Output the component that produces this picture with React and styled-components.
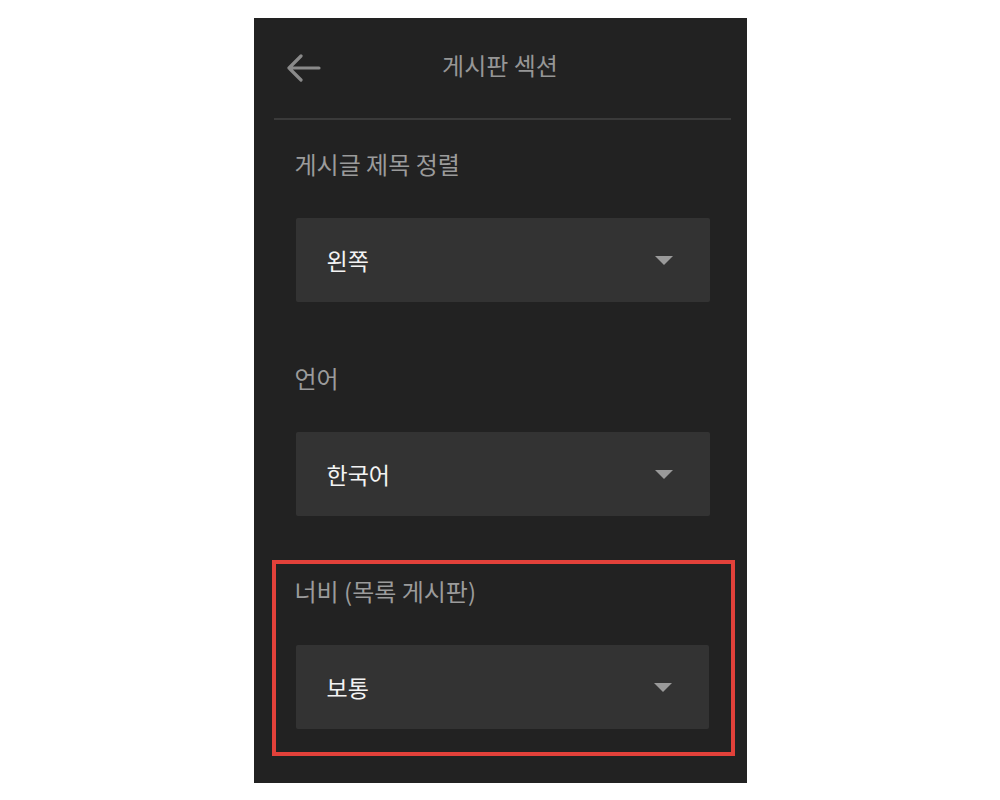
import React from "react";
import styled, { createGlobalStyle } from "styled-components";

const Global = createGlobalStyle`
  html, body { margin: 0; padding: 0; background: #ffffff; }
  body { font-family: "Noto Sans CJK KR", "Noto Sans", sans-serif; }
`;

const Panel = styled.div`
  width: 493px;
  height: 765px;
  margin: 18px auto 0;
  background: #222222;
  display: flex;
  flex-direction: column;
  box-sizing: border-box;
`;

const Header = styled.header`
  height: 100px;
  display: grid;
  grid-template-columns: 1fr auto 1fr;
  align-items: center;
`;

const BackButton = styled.button`
  justify-self: start;
  margin-left: 33px;
  padding: 0;
  border: 0;
  background: none;
  width: 34px;
  height: 28px;
  display: flex;
  align-items: center;
  cursor: pointer;
`;

const Title = styled.h1`
  margin: 0 0 6px;
  font-size: 24px;
  font-weight: 400;
  line-height: 32px;
  color: #969696;
`;

const Divider = styled.hr`
  margin: 0 16px 0 20px;
  height: 2px;
  border: 0;
  background: #3a3a3a;
`;

const Field = styled.section`
  display: flex;
  flex-direction: column;
  gap: 38px;
  margin: ${(p) => p.$top}px 0 0;
  padding: ${(p) => (p.$highlight ? "11px 22px 23px 19px" : "0 37px 0 41px")};
  ${(p) =>
    p.$highlight
      ? `margin-left: 18px; margin-right: 12px; border: 4px solid #e2413a;`
      : ""}
`;

const Label = styled.div`
  font-size: 24px;
  line-height: 32px;
  color: #9b9b9b;
`;

const Select = styled.div`
  height: 84px;
  margin-left: 1px;
  background: #333333;
  border-radius: 2px;
  display: flex;
  align-items: center;
  justify-content: space-between;
  padding: 0 37px 0 31px;
  box-sizing: border-box;
`;

const Value = styled.span`
  font-size: 23px;
  line-height: 32px;
  color: #f3f3f3;
`;

const Caret = styled.span`
  width: 0;
  height: 0;
  border-left: 9px solid transparent;
  border-right: 9px solid transparent;
  border-top: 9px solid #9a9a9a;
`;

const fields = [
  { label: "게시글 제목 정렬", value: "왼쪽", top: 28 },
  { label: "언어", value: "한국어", top: 60 },
  { label: "너비 (목록 게시판)", value: "보통", top: 44, highlight: true },
];

export default function App() {
  return (
    <>
      <Global />
      <Panel>
        <Header>
          <BackButton aria-label="back">
            <svg width="34" height="28" viewBox="0 0 34 28" fill="none">
              <path
                d="M2 14 H32 M14 2 L2 14 L14 26"
                stroke="#8a8a8a"
                strokeWidth="3.2"
                strokeLinecap="round"
                strokeLinejoin="round"
              />
            </svg>
          </BackButton>
          <Title>게시판 섹션</Title>
          <span />
        </Header>
        <Divider />
        {fields.map((f) => (
          <Field key={f.label} $top={f.top} $highlight={f.highlight}>
            <Label>{f.label}</Label>
            <Select>
              <Value>{f.value}</Value>
              <Caret />
            </Select>
          </Field>
        ))}
      </Panel>
    </>
  );
}
